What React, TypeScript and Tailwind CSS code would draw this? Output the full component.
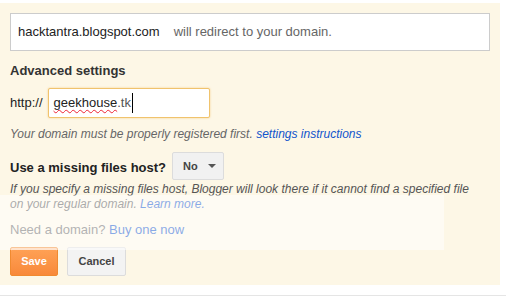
import React from 'react';

const App: React.FC = () => {
  return (
    <div className="w-[506px] h-[296px] bg-white font-['Liberation_Sans',Arial,sans-serif] text-[13px] text-[#222] overflow-hidden">
      <div className="w-[500px] h-[282px] mt-[3px] bg-[#fdf7e6] relative pt-[10px] pl-[10px]">
        {/* redirect notice */}
        <div className="w-[480px] h-[38px] bg-white border border-[#cccccc] flex items-center pl-[7px]">
          <span className="text-[#222]">hacktantra.blogspot.com</span>
          <span className="ml-[14px] text-[#666]">will redirect to your domain.</span>
        </div>

        <h3 className="mt-[12px] font-bold text-[13px] text-[#333] leading-[16px]">Advanced settings</h3>

        <div className="mt-[9px] flex items-start">
          <span className="mt-[5px] text-[#222]">http://</span>
          <div className="ml-[5px] w-[162px] h-[30px] bg-white border border-[#f0c36d] rounded-[2px] shadow-[0_0_2px_rgba(240,170,60,0.6)] flex items-center pl-[5px]">
            <span className="underline decoration-wavy decoration-[#e23] decoration-[1px] underline-offset-[2px]">geekhouse</span>
            <span className="text-[#555]">.tk</span>
            <span className="w-px h-[20px] bg-black ml-px" />
          </div>
        </div>

        <p className="mt-[9px] italic text-[12px] text-[#666] leading-[15px]">
          Your domain must be properly registered first.{' '}
          <span className="text-[#1155cc]">settings instructions</span>
        </p>

        <div className="mt-[10px] flex items-start">
          <span className="mt-[6px] font-bold text-[13px] text-[#222]">Use a missing files host?</span>
          <div className="ml-[6px] w-[52px] h-[28px] bg-[#f1f1f1] border border-[#dcdcdc] rounded-[2px] flex items-center pl-[10px] gap-[10px]">
            <span className="font-bold text-[11px] text-[#444]">No</span>
            <svg width="8" height="4" viewBox="0 0 8 4">
              <path d="M0 0 L8 0 L4 4 Z" fill="#555" />
            </svg>
          </div>
        </div>

        <p className="mt-[2px] italic text-[12px] text-[#555] leading-[15px] w-[472px]">
          If you specify a missing files host, Blogger will look there if it cannot find a specified file on your regular domain.{' '}
          <span className="text-[#1155cc]">Learn more.</span>
        </p>

        <p className="mt-[10px] text-[13px] leading-[15px] text-[#666]">
          Need a domain? <span className="text-[#1155cc]">Buy one now</span>
        </p>

        <div className="mt-[10px] flex gap-[9px]">
          <button className="w-[48px] h-[29px] rounded-[2px] border border-[#f08a30] bg-gradient-to-b from-[#ffa256] to-[#f8893a] shadow-[inset_0_2px_0_#ffc79a] text-white font-bold text-[11px]">
            Save
          </button>
          <button className="w-[59px] h-[29px] rounded-[2px] border border-[#dcdcdc] bg-[#f3f3f3] text-[#444] font-bold text-[11px]">
            Cancel
          </button>
        </div>

        {/* faded banner overlay */}
        <div className="absolute left-0 top-[192px] w-[444px] h-[55px] bg-white/50 pointer-events-none" />
      </div>
      <div className="mt-[10px] h-px bg-[#e5e5e5]" />
    </div>
  );
};

export default App;
